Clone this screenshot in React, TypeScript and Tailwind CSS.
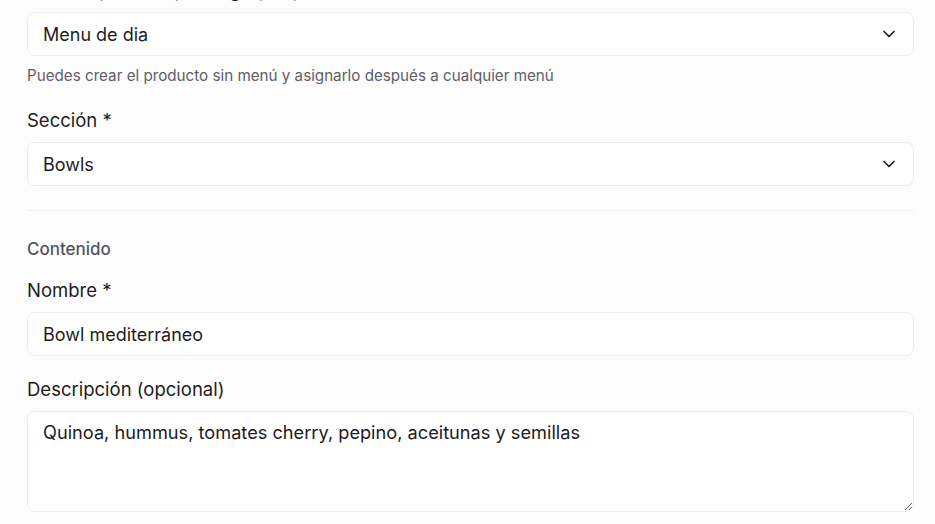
import React from "react";
import { ChevronDown } from "lucide-react";

const font = { fontFamily: "Inter, 'Noto Sans', sans-serif" };

const Label: React.FC<{ children: React.ReactNode }> = ({ children }) => (
  <label className="block text-[18.5px] leading-7 text-[#1c1c1e] mb-2">{children}</label>
);

const SelectBox: React.FC<{ value: string }> = ({ value }) => (
  <div className="h-[44px] w-full rounded-lg border border-[#ececef] bg-white flex items-center justify-between pl-[15px] pr-[14px]">
    <span className="text-[18px] text-[#1c1c1e]">{value}</span>
    <ChevronDown className="w-5 h-5 text-[#1c1c1e]" strokeWidth={2} />
  </div>
);

export default function App() {
  return (
    <div className="min-h-screen bg-[#fdfcfd] overflow-hidden" style={font}>
      <div className="pl-[27px] pr-[21px] mt-[-24px]">
        {/* Menu */}
        <Label>Menú (opcional) para agrupar productos del día</Label>
        <SelectBox value="Menu de dia" />
        <p className="mt-[10px] text-[15.2px] leading-5 text-[#5f5f66]">
          Puedes crear el producto sin menú y asignarlo después a cualquier menú
        </p>

        {/* Sección */}
        <div className="mt-[20px]">
          <Label>Sección *</Label>
          <SelectBox value="Bowls" />
        </div>

        <div className="mt-[24px] h-px bg-[#efeef1]" />

        {/* Contenido */}
        <h3 className="mt-[26px] text-[17px] leading-6 font-medium text-[#55555c]">Contenido</h3>

        <div className="mt-[15px]">
          <Label>Nombre *</Label>
          <div className="h-[44px] w-full rounded-lg border border-[#ececef] bg-white flex items-center pl-[15px]">
            <span className="text-[18px] text-[#1c1c1e]">Bowl mediterráneo</span>
          </div>
        </div>

        <div className="mt-[19px]">
          <Label>Descripción (opcional)</Label>
          <textarea
            readOnly
            defaultValue="Quinoa, hummus, tomates cherry, pepino, aceitunas y semillas"
            className="block w-full h-[101px] rounded-lg border border-[#ececef] bg-white px-[15px] pt-[6px] text-[18.2px] leading-7 text-[#1c1c1e] outline-none resize-y"
            style={font}
          />
        </div>
      </div>
    </div>
  );
}
